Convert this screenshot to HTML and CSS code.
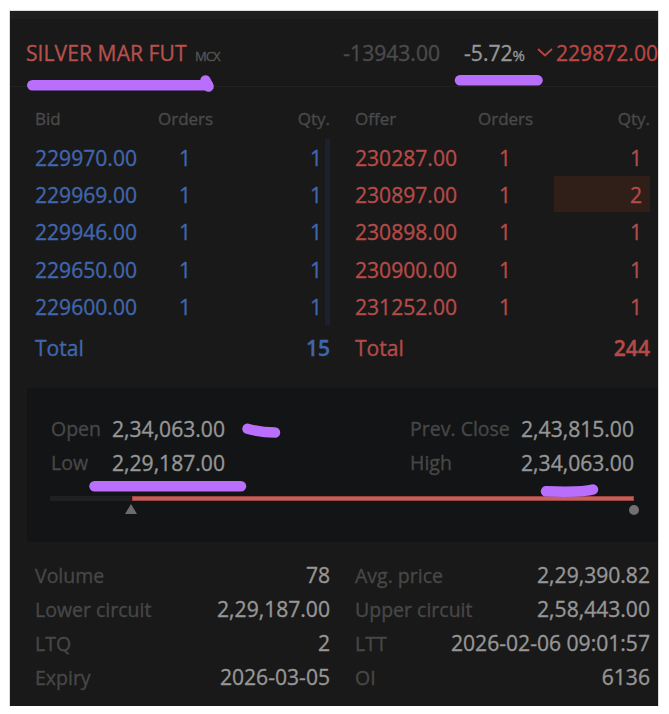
FILE: index.html
```html
<!DOCTYPE html>
<html lang="en">
<head>
    <meta charset="UTF-8">
    <meta name="viewport" content="width=device-width, initial-scale=1.0">
    <title>SILVER MAR FUT - Market Depth</title>
    <link rel="stylesheet" href="styles.css">
</head>
<body>

<div class="panel">
    <div class="header">
        <span class="symbol">SILVER MAR FUT</span>
        <span class="exchange">MCX</span>
        <span class="change">-13943.00</span>
        <span class="percent">-5.72<small>%</small></span>
        <svg class="arrow" width="18" height="12" viewBox="0 0 18 12"><path d="M2 2 L9 8.5 L16 2"/></svg>
        <span class="price">229872.00</span>
    </div>

    <div class="depth">
        <div class="side bid">
            <div class="row head"><span>Bid</span><span>Orders</span><span>Qty.</span></div>
            <div class="levels">
                <div class="row"><span>229970.00</span><span>1</span><span>1</span></div>
                <div class="row"><span>229969.00</span><span>1</span><span>1</span></div>
                <div class="row"><span>229946.00</span><span>1</span><span>1</span></div>
                <div class="row"><span>229650.00</span><span>1</span><span>1</span></div>
                <div class="row"><span>229600.00</span><span>1</span><span>1</span></div>
            </div>
            <div class="total"><span>Total</span><b>15</b></div>
        </div>
        <div class="side offer">
            <div class="row head"><span>Offer</span><span>Orders</span><span>Qty.</span></div>
            <div class="levels">
                <div class="row"><span>230287.00</span><span>1</span><span>1</span></div>
                <div class="row"><span>230897.00</span><span>1</span><span class="big">2</span></div>
                <div class="row"><span>230898.00</span><span>1</span><span>1</span></div>
                <div class="row"><span>230900.00</span><span>1</span><span>1</span></div>
                <div class="row"><span>231252.00</span><span>1</span><span>1</span></div>
            </div>
            <div class="total"><span>Total</span><b>244</b></div>
        </div>
    </div>

    <div class="ohlc">
        <div class="ohlc-values">
            <div class="pairs left">
                <label>Open</label><span>2,34,063.00</span>
                <label>Low</label><span>2,29,187.00</span>
            </div>
            <div class="pairs right">
                <label>Prev. Close</label><span>2,43,815.00</span>
                <label>High</label><span>2,34,063.00</span>
            </div>
        </div>
        <div class="range"><div class="range-fill"></div></div>
        <div class="markers"><i class="open-mark"></i><i class="last-mark"></i></div>
    </div>

    <div class="stats">
        <div class="stat"><label>Volume</label><span>78</span></div>
        <div class="stat"><label>Avg. price</label><span>2,29,390.82</span></div>
        <div class="stat"><label>Lower circuit</label><span>2,29,187.00</span></div>
        <div class="stat"><label>Upper circuit</label><span>2,58,443.00</span></div>
        <div class="stat"><label>LTQ</label><span>2</span></div>
        <div class="stat"><label>LTT</label><span>2026-02-06 09:01:57</span></div>
        <div class="stat"><label>Expiry</label><span>2026-03-05</span></div>
        <div class="stat"><label>OI</label><span>6136</span></div>
    </div>

    <!-- highlighter strokes -->
    <svg class="highlights" width="648" height="695" viewBox="10 11 648 695">
        <path d="M32.3 85.3 H208"/>
        <path d="M205.5 80.5 L208.5 86.5"/>
        <path d="M460 80.3 H537.5"/>
        <path d="M247.5 428.8 Q261 432.5 275 432.5"/>
        <path d="M94.5 486.3 H241"/>
        <path d="M546 491.3 Q583 492.5 593 489.5"/>
    </svg>
</div>

</body>
</html>
```
FILE: styles.css
```css
* {
    box-sizing: border-box;
    margin: 0;
    padding: 0;
}

body {
    font-family: "Open Sans", "Noto Sans", sans-serif;
    background: #fff;
    padding: 11px 0 0 10px;
}

.panel {
    position: relative;
    width: 648px;
    height: 695px;
    background: #191919;
    border-top: 8px solid #1d1f1f;
    box-shadow: 0 0 0 1px #dcdcdc;
    font-size: 21.1px;
    color: #969696;
    -webkit-text-stroke: 0.35px;
}

.header {
    display: flex;
    align-items: baseline;
    height: 68px;
    padding-left: 16px;
    line-height: 68px;
    border-bottom: 1px solid #212121;
    white-space: nowrap;
}

.symbol {
    color: #b5504d;
    width: 169px;
    letter-spacing: 0.05px;
}

.exchange {
    font-size: 13px;
    letter-spacing: -1px;
    color: #555;
}

.change {
    margin-left: auto;
    color: #4b4b4b;
}

.percent {
    margin-left: 24px;
}

.percent small {
    font-size: 15px;
}

.arrow {
    margin: 0 2px 0 11px;
    align-self: center;
}

.arrow path {
    fill: none;
    stroke: #b9443f;
    stroke-width: 2;
}

.price {
    color: #bb4642;
}

.depth {
    display: flex;
    gap: 25px;
    padding: 13px 8px 0 25px;
}

.side {
    width: 295px;
}

.bid {
    color: #4066ae;
}

.offer {
    color: #b44b48;
}

.row {
    display: grid;
    grid-template-columns: 123px 76px 96px;
    height: 37.2px;
    line-height: 38px;
}

.row span:nth-child(2) {
    padding-left: 21px;
}

.row span:last-child {
    padding-right: 8px;
    text-align: right;
}

.row.head {
    height: 39px;
    line-height: 37px;
    font-size: 17px;
    color: #4a4a4a;
}

.row.head span {
    padding: 0;
}

.bid .levels {
    border-right: 5px solid #1b222b;
}

.bid .levels .row {
    margin-right: -5px;
}

.row .big {
    height: 36px;
    background: #301e19;
}

.total {
    display: flex;
    justify-content: space-between;
    height: 45px;
    line-height: 46px;
}

.total b {
    font-weight: 600;
}

label {
    font-size: 19.5px;
    color: #474747;
}

.ohlc {
    height: 154px;
    margin: 18px 0 0 17px;
    padding: 24px 24px 0 24px;
    background: #131415;
}

.ohlc-values {
    display: flex;
    justify-content: space-between;
}

.pairs {
    display: grid;
    grid-template-columns: 61px auto;
    line-height: 34px;
}

.pairs.right {
    grid-template-columns: 111px auto;
}

.range {
    height: 5px;
    margin: 16px 0 0 -1px;
    background: #202020;
}

.range-fill {
    height: 5px;
    margin-left: 82px;
    background: #c2605c;
    border: 1px solid #9c4340;
}

.markers {
    display: flex;
    align-items: center;
    justify-content: space-between;
    height: 14px;
    margin: 1px -5px 0 74px;
}

.open-mark {
    border: 6px solid transparent;
    border-top: 0;
    border-bottom: 10px solid #6c6c6c;
}

.last-mark {
    width: 10px;
    height: 10px;
    margin-top: 2px;
    border-radius: 50%;
    background: #707070;
}

.stats {
    display: grid;
    grid-template-columns: 295px 295px;
    column-gap: 25px;
    padding: 16px 0 0 25px;
}

.stat {
    display: flex;
    justify-content: space-between;
    align-items: baseline;
    height: 34px;
    line-height: 34px;
}

.highlights {
    position: absolute;
    top: -8px;
    left: 0;
}

.highlights path {
    fill: none;
    stroke: #b96ffb;
    stroke-width: 10.5;
    stroke-linecap: round;
}
```
